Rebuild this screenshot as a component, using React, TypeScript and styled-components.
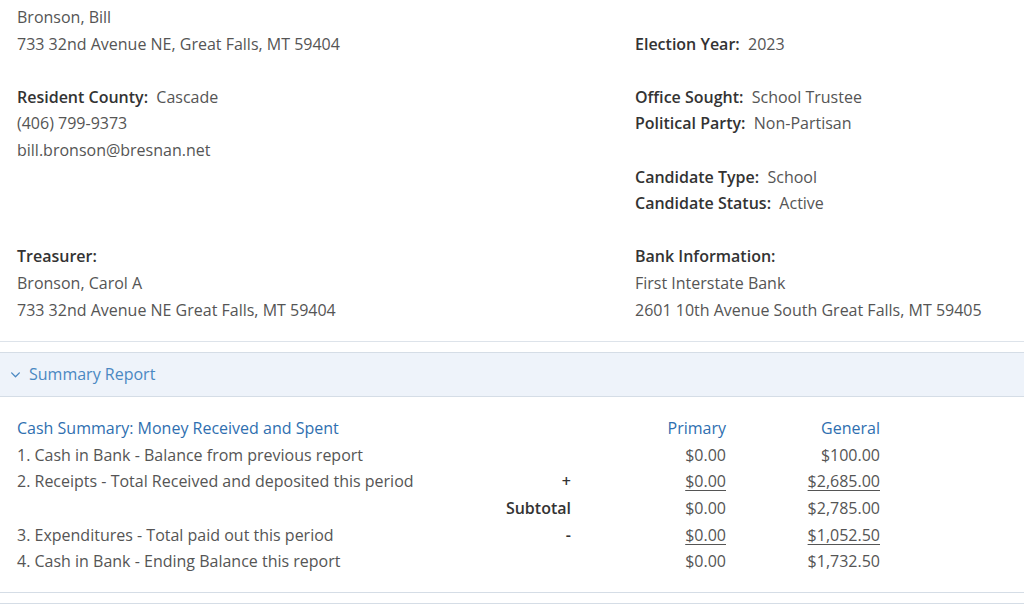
import styled, { createGlobalStyle } from "styled-components";

const LINE = 26.6;

const GlobalStyle = createGlobalStyle`
  html, body {
    margin: 0;
    padding: 0;
    background: #ffffff;
  }
  body {
    font-family: "Open Sans", "Liberation Sans", sans-serif;
    font-size: 16px;
    color: #555555;
  }
`;

interface CashRow {
  label: string;
  sign?: string;
  primary: string;
  general: string;
  underline?: boolean;
}

const cashRows: CashRow[] = [
  {
    label: "1. Cash in Bank - Balance from previous report",
    primary: "$0.00",
    general: "$100.00",
  },
  {
    label: "2. Receipts - Total Received and deposited this period",
    sign: "+",
    primary: "$0.00",
    general: "$2,685.00",
    underline: true,
  },
  { label: "", sign: "Subtotal", primary: "$0.00", general: "$2,785.00" },
  {
    label: "3. Expenditures - Total paid out this period",
    sign: "-",
    primary: "$0.00",
    general: "$1,052.50",
    underline: true,
  },
  {
    label: "4. Cash in Bank - Ending Balance this report",
    primary: "$0.00",
    general: "$1,732.50",
  },
];

function Field({ label, value }: { label: string; value: string }) {
  return (
    <Line>
      <Label>{label}:</Label>
      {"  "}
      {value}
    </Line>
  );
}

function App() {
  return (
    <>
      <GlobalStyle />
      <Page>
        <InfoPanel>
          <InfoGrid>
            <Column>
              <Group>
                <Line>Bronson, Bill</Line>
                <Line>733 32nd Avenue NE, Great Falls, MT 59404</Line>
              </Group>
              <Group>
                <Field label="Resident County" value="Cascade" />
                <Line>(406) 799-9373</Line>
                <Line>bill.bronson@bresnan.net</Line>
              </Group>
            </Column>
            <Column $offset>
              <Group>
                <Field label="Election Year" value="2023" />
              </Group>
              <Group>
                <Field label="Office Sought" value="School Trustee" />
                <Field label="Political Party" value="Non-Partisan" />
              </Group>
              <Group>
                <Field label="Candidate Type" value="School" />
                <Field label="Candidate Status" value="Active" />
              </Group>
            </Column>
            <Group>
              <Line>
                <Label>Treasurer:</Label>
              </Line>
              <Line>Bronson, Carol A</Line>
              <Line>733 32nd Avenue NE Great Falls, MT 59404</Line>
            </Group>
            <Group>
              <Line>
                <Label>Bank Information:</Label>
              </Line>
              <Line>First Interstate Bank</Line>
              <Line>2601 10th Avenue South Great Falls, MT 59405</Line>
            </Group>
          </InfoGrid>
        </InfoPanel>

        <AccordionItem>
          <AccordionHeader>
            <svg width="11" height="11" viewBox="0 0 10 10" fill="none">
              <path
                d="M1.5 3.5 L5 7 L8.5 3.5"
                stroke="#4a88c2"
                strokeWidth="1.2"
                strokeLinecap="round"
                strokeLinejoin="round"
              />
            </svg>
            <HeaderTitle>Summary Report</HeaderTitle>
          </AccordionHeader>
          <AccordionBody>
            <CashTable>
              <HeadCell>Cash Summary: Money Received and Spent</HeadCell>
              <span />
              <HeadCell $right>Primary</HeadCell>
              <HeadCell $right>General</HeadCell>
              {cashRows.map((row, i) => (
                <CashLine key={i}>
                  <Cell>{row.label}</Cell>
                  <SignCell>{row.sign}</SignCell>
                  <Amount $underline={row.underline}>{row.primary}</Amount>
                  <Amount $underline={row.underline}>{row.general}</Amount>
                </CashLine>
              ))}
            </CashTable>
          </AccordionBody>
        </AccordionItem>
        <NextItem />
      </Page>
    </>
  );
}

const Page = styled.div`
  width: 1024px;
  min-height: 606px;
  overflow: hidden;
`;

const InfoPanel = styled.section`
  padding: 4px 17px 18px;
  border-bottom: 1px solid #dde3ea;
`;

const InfoGrid = styled.div`
  display: grid;
  grid-template-columns: 618px 1fr;
  row-gap: ${LINE}px;
`;

const Column = styled.div<{ $offset?: boolean }>`
  display: flex;
  flex-direction: column;
  gap: ${LINE}px;
  padding-top: ${(p) => (p.$offset ? LINE : 0)}px;
`;

const Group = styled.div`
  display: flex;
  flex-direction: column;
`;

const Line = styled.div`
  line-height: ${LINE}px;
  white-space: pre;
  color: #555555;
`;

const Label = styled.span`
  font-weight: 600;
  color: #333333;
`;

const AccordionItem = styled.section`
  margin-top: 10px;
  border-top: 1px solid #d5dde6;
  border-bottom: 1px solid #d5dde6;
`;

const AccordionHeader = styled.div`
  display: flex;
  align-items: center;
  gap: 8px;
  height: 43px;
  padding-left: 10px;
  background: #eef3fa;
  border-bottom: 1px solid #d5dde6;
`;

const HeaderTitle = styled.span`
  font-size: 16px;
  color: #4a88c2;
  line-height: 1;
  padding-bottom: 1px;
`;

const AccordionBody = styled.div`
  padding: 18px 144px 17px 17px;
`;

const CashTable = styled.div`
  display: grid;
  grid-template-columns: 1fr 120px 155px 154px;
  line-height: ${LINE}px;
`;

const CashLine = styled.div`
  display: contents;
`;

const HeadCell = styled.span<{ $right?: boolean }>`
  color: #2f6fb0;
  font-weight: 500;
  text-align: ${(p) => (p.$right ? "right" : "left")};
`;

const Cell = styled.span`
  color: #555555;
  white-space: nowrap;
`;

const SignCell = styled.span`
  text-align: right;
  font-weight: 600;
  color: #333333;
`;

const Amount = styled.span<{ $underline?: boolean }>`
  text-align: right;
  color: #555555;
  text-decoration: ${(p) => (p.$underline ? "underline" : "none")};
  text-underline-offset: 3px;
`;

const NextItem = styled.div`
  margin-top: 10px;
  border-top: 1px solid #d5dde6;
  height: 20px;
`;

export default App;
